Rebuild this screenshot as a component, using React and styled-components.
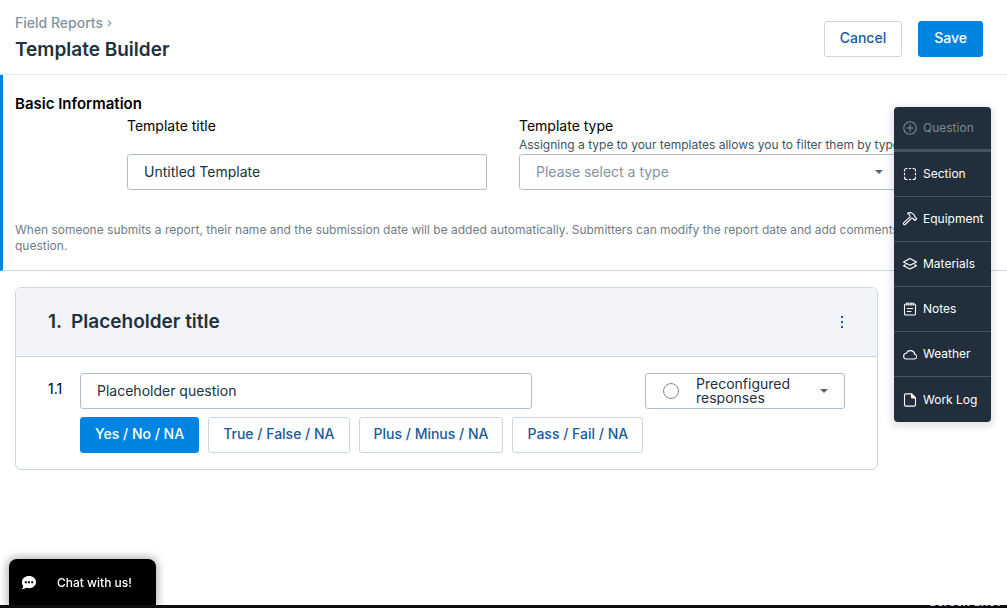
import React from "react";
import styled, { createGlobalStyle, css } from "styled-components";

const GlobalStyle = createGlobalStyle`
  *, *::before, *::after { box-sizing: border-box; }
  body {
    margin: 0;
    background: #fff;
    color: #000;
    font-family: Inter, "Liberation Sans", sans-serif;
    font-size: 14px;
    line-height: 20px;
  }
  button, input, select { font: inherit; }
  h1, h2, p { margin: 0; }
`;

const Header = styled.header`
  display: flex;
  align-items: center;
  justify-content: space-between;
  padding: 12px 24px 8px 15px;
  border-bottom: 1px solid #e4e7ea;
`;

const Crumb = styled.a`
  display: flex;
  align-items: center;
  gap: 4px;
  color: #8493a0;
  font-size: 14px;
  font-weight: 500;
  line-height: 22px;
  text-decoration: none;
`;

const PageTitle = styled.h1`
  color: #22313d;
  font-size: 19px;
  font-weight: 600;
  line-height: 32px;
`;

const Actions = styled.div`
  display: flex;
  gap: 16px;
`;

const Button = styled.button`
  height: 36px;
  padding: 0 ${(p) => (p.$compact ? 14 : 15)}px 2px;
  border: 1px solid #c8d7e1;
  border-radius: 3px;
  background: #fff;
  color: #185a9d;
  font-weight: 500;
  white-space: nowrap;
  cursor: pointer;
  ${(p) =>
    p.$primary &&
    css`
      border-color: #0084e2;
      background: #0084e2;
      color: #fff;
    `}
`;

const Info = styled.section`
  padding: 18px 15px 16px 12px;
  border-left: 3px solid #0084e2;
  border-bottom: 1px solid #c8d7e1;
`;

const InfoTitle = styled.h2`
  font-size: 15px;
  font-weight: 600;
  line-height: 22px;
`;

const Fields = styled.div`
  display: flex;
  gap: 32px;
  margin: 0 0 32px 112px;
`;

const Field = styled.div`
  display: flex;
  flex-direction: column;
  justify-content: space-between;
  flex: 0 1 ${(p) => p.$basis};
  min-height: 75px;
`;

const Hint = styled.p`
  color: #44535f;
  font-size: 12px;
  line-height: 16px;
  white-space: nowrap;
`;

const FieldLabel = styled.label`
  display: block;
  line-height: 22px;
`;

const control = css`
  width: 100%;
  height: 36px;
  padding: 0 16px 1px;
  border: 1px solid #aebfcc;
  border-radius: 3px;
  background: #fff;
  color: #22313d;
`;

const TextInput = styled.input`
  ${control}
`;

const SelectBox = styled.div`
  position: relative;
  width: ${(p) => p.$width || "100%"};
`;

const Select = styled.select`
  ${control}
  appearance: none;
  color: ${(p) => (p.$empty ? "#8493a0" : "#22313d")};
  ${(p) =>
    p.$wrap &&
    css`
      padding: 0 48px 0 50px;
      line-height: 14px;
      white-space: normal;
    `}
`;

const Caret = styled.span`
  position: absolute;
  top: 16px;
  right: 17px;
  border: 4px solid transparent;
  border-top-color: #566673;
  border-bottom: 0;
  pointer-events: none;
`;

const TypeMark = styled.span`
  position: absolute;
  top: 10px;
  left: 18px;
  width: 16px;
  height: 16px;
  border: 1px solid #7b8a96;
  border-radius: 50%;
  pointer-events: none;
`;

const Note = styled.p`
  color: #6f7d88;
  font-size: 12px;
  line-height: 16px;
`;

const Card = styled.section`
  margin: 16px 129px 0 15px;
  border: 1px solid #c8d7e1;
  border-radius: 6px;
  overflow: hidden;
`;

const CardHeader = styled.header`
  display: flex;
  align-items: center;
  justify-content: space-between;
  padding: 20px 24px 20px 32px;
  border-bottom: 1px solid #c8d7e1;
  background: #f3f4f9;
`;

const CardTitle = styled.h2`
  display: flex;
  gap: 9px;
  color: #22313d;
  font-size: 19px;
  font-weight: 600;
  line-height: 28px;
`;

const MenuButton = styled.button`
  display: flex;
  padding: 4px;
  border: 0;
  background: none;
  cursor: pointer;
`;

const Question = styled.div`
  display: grid;
  grid-template-columns: 32px 1fr;
  padding: 16px 32px 16px 32px;
`;

const Number = styled.span`
  padding-top: 6px;
`;

const QuestionBody = styled.div`
  display: flex;
  flex-direction: column;
  gap: 8px;
`;

const QuestionRow = styled.div`
  display: flex;
  justify-content: space-between;
`;

const QuestionInput = styled.div`
  flex: 0 1 452px;
`;

const Choices = styled.div`
  display: flex;
  gap: 9px;
`;

const Palette = styled.nav`
  position: absolute;
  top: 107px;
  right: 16px;
  width: 97px;
  border-radius: 4px;
  background: #212f3c;
  box-shadow: 0 2px 6px 3px rgba(40, 40, 80, 0.12);
  overflow: hidden;
`;

const PaletteItem = styled.button`
  display: flex;
  align-items: center;
  gap: 5px;
  width: 100%;
  height: 45px;
  padding: 0 0 0 8px;
  border: 0;
  border-bottom: 1px solid #465561;
  background: none;
  color: #fff;
  font-size: 12px;
  white-space: nowrap;
  cursor: pointer;
  &:first-child {
    border-bottom-width: 3px;
  }
  &:last-child {
    border-bottom: 0;
  }
  &:disabled {
    color: #7c8892;
  }
`;

const Icon = styled.svg`
  flex: none;
  width: 16px;
  height: 16px;
  fill: none;
  stroke: currentColor;
  stroke-width: 1.1;
  stroke-linecap: round;
  stroke-linejoin: round;
`;

const Chat = styled.button`
  position: fixed;
  bottom: 3px;
  left: 9px;
  display: flex;
  align-items: center;
  gap: 20px;
  width: 147px;
  height: 46px;
  padding: 1px 12px 0;
  border: 0;
  border-radius: 8px 8px 0 0;
  background: #000;
  color: #fff;
  font-size: 12px;
  font-weight: 500;
  box-shadow: 0 0 8px 2px rgba(0, 0, 0, 0.3);
  cursor: pointer;
`;

const Strip = styled.footer`
  position: fixed;
  right: 0;
  bottom: 0;
  left: 0;
  display: flex;
  justify-content: flex-end;
  align-items: flex-end;
  height: 3px;
  padding-right: 7px;
  background: #0d0d11;
  color: #d5d5d5;
  font-size: 12px;
  font-weight: 700;
  line-height: 12px;
  overflow: hidden;
`;

const icons = {
  question: (
    <>
      <circle cx="8" cy="8" r="6.3" />
      <path d="M8 4.8v6.4M4.8 8h6.4" />
    </>
  ),
  section: (
    <path d="M2.5 5V4.500A2 2 0 0 1 4.500 2.500H5M7.300 2.500h1.400M11 2.500h.5A2 2 0 0 1 13.500 4.500V5M13.500 7.300v1.400M13.500 11v.5A2 2 0 0 1 11.500 13.500H11M8.700 13.500H7.300M5 13.500H4.500A2 2 0 0 1 2.500 11.500V11M2.500 8.700V7.300" />
  ),
  equipment: (
    <path d="M5.5 2.3c2-1 4.3-.7 5.8.8l1.1 1.1c.2.7.1 1.1.2 1.4l2.2 2-1.9 1.9-2-2.1c-.5 0-.9 0-1.300-.3L3.200 13.500c-1 .8-2.400-.6-1.600-1.600l6.500-6.100c0-1.800-.9-2.600-2.600-3.500Z" />
  ),
  materials: (
    <>
      <path d="m8 2.5 6.500 3.400L8 9.300 1.500 5.900Z" />
      <path d="m3.500 8.700-2 1L8 13.100l6.500-3.400-2-1" />
    </>
  ),
  notes: (
    <>
      <rect x="2.5" y="3" width="11" height="11" rx="1.3" />
      <path d="M4.800 1.800v2.400M6.900 1.800v2.400M9.100 1.800v2.400M11.200 1.800v2.400M5.300 7.500h5.400M5.300 10.500H9" />
    </>
  ),
  weather: (
    <path d="M3.800 13h8.800a2.400 2.400 0 0 0 .2-4.700A4.400 4.400 0 0 0 4.400 7.300a2.900 2.900 0 0 0-.6 5.700Z" />
  ),
  log: (
    <>
      <path d="M3.800 1.900h5.700l4 4v6.900c0 .8-.5 1.300-1.300 1.300H3.800c-.8 0-1.300-.5-1.300-1.300V3.200c0-.8.500-1.300 1.300-1.300Z" />
      <path d="M9.500 1.900v3.400c0 .4.200.6.600.6h3.400Z" fill="currentColor" />
    </>
  ),
};

const tools = [
  ["question", "Question"],
  ["section", "Section"],
  ["equipment", "Equipment"],
  ["materials", "Materials"],
  ["notes", "Notes"],
  ["weather", "Weather"],
  ["log", "Work Log"],
];

const choices = [
  "Yes / No / NA",
  "True / False / NA",
  "Plus / Minus / NA",
  "Pass / Fail / NA",
];

export default function App() {
  return (
    <>
      <GlobalStyle />
      <Header>
        <div>
          <Crumb href="#reports">
            Field Reports
            <svg width="5" height="8" viewBox="0 0 5 8" fill="none" stroke="currentColor" strokeWidth="1.2" aria-hidden="true">
              <path d="M1 1.500 3.800 4.300 1 7.100" />
            </svg>
          </Crumb>
          <PageTitle>Template Builder</PageTitle>
        </div>
        <Actions>
          <Button type="button">Cancel</Button>
          <Button type="button" $primary>Save</Button>
        </Actions>
      </Header>

      <main>
        <Info>
          <InfoTitle>Basic Information</InfoTitle>
          <Fields>
            <Field $basis="360px">
              <FieldLabel htmlFor="title">Template title</FieldLabel>
              <TextInput id="title" defaultValue="Untitled Template" />
            </Field>
            <Field $basis="380px">
              <div>
                <FieldLabel htmlFor="type">Template type</FieldLabel>
                <Hint>Assigning a type to your templates allows you to filter them by type</Hint>
              </div>
              <SelectBox>
                <Select id="type" $empty>
                  <option>Please select a type</option>
                </Select>
                <Caret />
              </SelectBox>
            </Field>
          </Fields>
          <Note>
            When someone submits a report, their name and the submission date will be added
            automatically. Submitters can modify the report date and add comments for each question.
          </Note>
        </Info>

        <Card>
          <CardHeader>
            <CardTitle>
              <span>1.</span>
              <span>Placeholder title</span>
            </CardTitle>
            <MenuButton type="button" aria-label="Section options">
              <svg width="14" height="14" viewBox="0 0 14 14" fill="#185a9d" aria-hidden="true">
                <path d="M6 1h2v2H6zM6 6h2v2H6zM6 11h2v2H6z" />
              </svg>
            </MenuButton>
          </CardHeader>
          <Question>
            <Number>1.1</Number>
            <QuestionBody>
              <QuestionRow>
                <QuestionInput>
                  <TextInput aria-label="Question 1.1" defaultValue="Placeholder question" />
                </QuestionInput>
                <SelectBox $width="200px">
                  <Select aria-label="Response type" $wrap>
                    <option>Preconfigured responses</option>
                  </Select>
                  <TypeMark />
                  <Caret />
                </SelectBox>
              </QuestionRow>
              <Choices>
                {choices.map((choice, i) => (
                  <Button type="button" key={choice} $compact $primary={i === 0}>{choice}</Button>
                ))}
              </Choices>
            </QuestionBody>
          </Question>
        </Card>
      </main>

      <Palette aria-label="Add to template">
        {tools.map(([id, label]) => (
          <PaletteItem type="button" key={id} disabled={id === "question"}>
            <Icon viewBox="0 0 16 16" aria-hidden="true">{icons[id]}</Icon>
            {label}
          </PaletteItem>
        ))}
      </Palette>

      <Chat type="button">
        <svg width="16" height="16" viewBox="0 0 16 16" fill="#fff" aria-hidden="true">
          <path d="M8 1c4 0 7 2.600 7 6s-3 6.200-7 6.200c-1 0-2-.2-2.800-.5C4 13.600 2.500 14 1 14c.9-1 1.200-1.900 1.200-2.700A5.700 5.700 0 0 1 1 7c0-3.400 3-6 7-6Z" />
          <path fill="#000" d="M3.800 6.200h2v2h-2zM7 6.200h2v2H7zM10.200 6.200h2v2h-2z" />
        </svg>
        Chat with us!
      </Chat>
      <Strip>Screen Shot</Strip>
    </>
  );
}
